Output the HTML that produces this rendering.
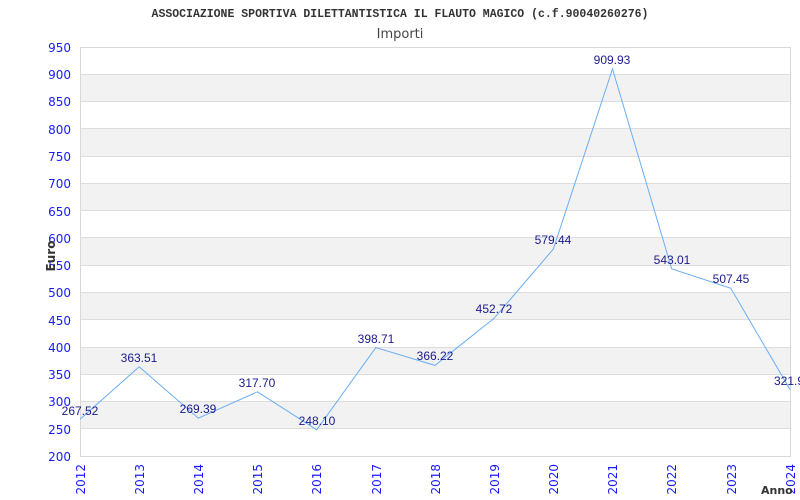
<!DOCTYPE html>
<html><head><meta charset="utf-8"><style>html,body{margin:0;padding:0;background:#fff}svg{display:block}</style></head>
<body>
<svg width="800" height="500" xmlns="http://www.w3.org/2000/svg" font-family="DejaVu Sans, Liberation Sans, sans-serif">
<rect width="800" height="500" fill="#fff"/>
<g fill="#f2f2f2">
<rect x="80" y="74.3" width="710" height="27.3"/>
<rect x="80" y="128.8" width="710" height="27.3"/>
<rect x="80" y="183.3" width="710" height="27.3"/>
<rect x="80" y="237.9" width="710" height="27.3"/>
<rect x="80" y="292.4" width="710" height="27.3"/>
<rect x="80" y="347.1" width="710" height="27.3"/>
<rect x="80" y="401.5" width="710" height="27.3"/>
</g>
<g stroke="#ddd" stroke-width="1">
<line x1="80" y1="74.5" x2="790" y2="74.5"/><line x1="80" y1="101.5" x2="790" y2="101.5"/>
<line x1="80" y1="128.5" x2="790" y2="128.5"/><line x1="80" y1="156.5" x2="790" y2="156.5"/>
<line x1="80" y1="183.5" x2="790" y2="183.5"/><line x1="80" y1="210.5" x2="790" y2="210.5"/>
<line x1="80" y1="237.5" x2="790" y2="237.5"/><line x1="80" y1="265.5" x2="790" y2="265.5"/>
<line x1="80" y1="292.5" x2="790" y2="292.5"/><line x1="80" y1="319.5" x2="790" y2="319.5"/>
<line x1="80" y1="347.5" x2="790" y2="347.5"/><line x1="80" y1="374.5" x2="790" y2="374.5"/>
<line x1="80" y1="401.5" x2="790" y2="401.5"/><line x1="80" y1="428.5" x2="790" y2="428.5"/>
</g>
<rect x="80.5" y="47.5" width="710" height="409" fill="none" stroke="#d8d8d8"/>
<text x="400" y="17" text-anchor="middle" font-family="Liberation Mono, monospace" font-weight="bold" font-size="11.5" fill="#333">ASSOCIAZIONE SPORTIVA DILETTANTISTICA IL FLAUTO MAGICO (c.f.90040260276)</text>
<text x="400" y="38" text-anchor="middle" font-size="13" fill="#444">Importi</text>
<g fill="#1a1aff" font-size="12" text-anchor="end">
<text x="71" y="52">950</text><text x="71" y="79">900</text><text x="71" y="106">850</text>
<text x="71" y="134">800</text><text x="71" y="161">750</text><text x="71" y="188">700</text>
<text x="71" y="216">650</text><text x="71" y="243">600</text><text x="71" y="270">550</text>
<text x="71" y="297">500</text><text x="71" y="325">450</text><text x="71" y="352">400</text>
<text x="71" y="379">350</text><text x="71" y="406">300</text><text x="71" y="434">250</text>
<text x="71" y="461">200</text>
</g>
<text transform="translate(55,256) rotate(-90)" text-anchor="middle" font-size="12" font-weight="bold" fill="#333">Euro</text>
<g fill="#1a1aff" font-size="12" text-anchor="end">
<text transform="translate(85,464) rotate(-90)">2012</text>
<text transform="translate(144,464) rotate(-90)">2013</text>
<text transform="translate(203,464) rotate(-90)">2014</text>
<text transform="translate(262,464) rotate(-90)">2015</text>
<text transform="translate(321,464) rotate(-90)">2016</text>
<text transform="translate(381,464) rotate(-90)">2017</text>
<text transform="translate(440,464) rotate(-90)">2018</text>
<text transform="translate(499,464) rotate(-90)">2019</text>
<text transform="translate(558,464) rotate(-90)">2020</text>
<text transform="translate(617,464) rotate(-90)">2021</text>
<text transform="translate(676,464) rotate(-90)">2022</text>
<text transform="translate(736,464) rotate(-90)">2023</text>
<text transform="translate(795,464) rotate(-90)">2024</text>
</g>
<text x="761" y="494" font-size="11" font-weight="bold" fill="#333">Anno</text>
<polyline fill="none" stroke="#6aaef5" stroke-width="1" points="80,419.2 139.2,366.8 198.3,418.2 257.5,391.8 316.7,429.8 375.8,347.6 435,365.4 494.2,318.2 553.3,249.1 612.5,68.9 671.7,268.9 730.8,288.3 790,389.5"/>
<g fill="#1a1a8c" font-size="12" text-anchor="middle" font-family="Liberation Sans, sans-serif">
<text x="80" y="415">267.52</text>
<text x="139" y="362">363.51</text>
<text x="198" y="413">269.39</text>
<text x="257" y="387">317.70</text>
<text x="317" y="425">248.10</text>
<text x="376" y="343">398.71</text>
<text x="435" y="360">366.22</text>
<text x="494" y="313">452.72</text>
<text x="553" y="244">579.44</text>
<text x="612" y="64">909.93</text>
<text x="672" y="264">543.01</text>
<text x="731" y="283">507.45</text>
<text x="789" y="385">321.9</text>
</g>
</svg>
</body></html>
